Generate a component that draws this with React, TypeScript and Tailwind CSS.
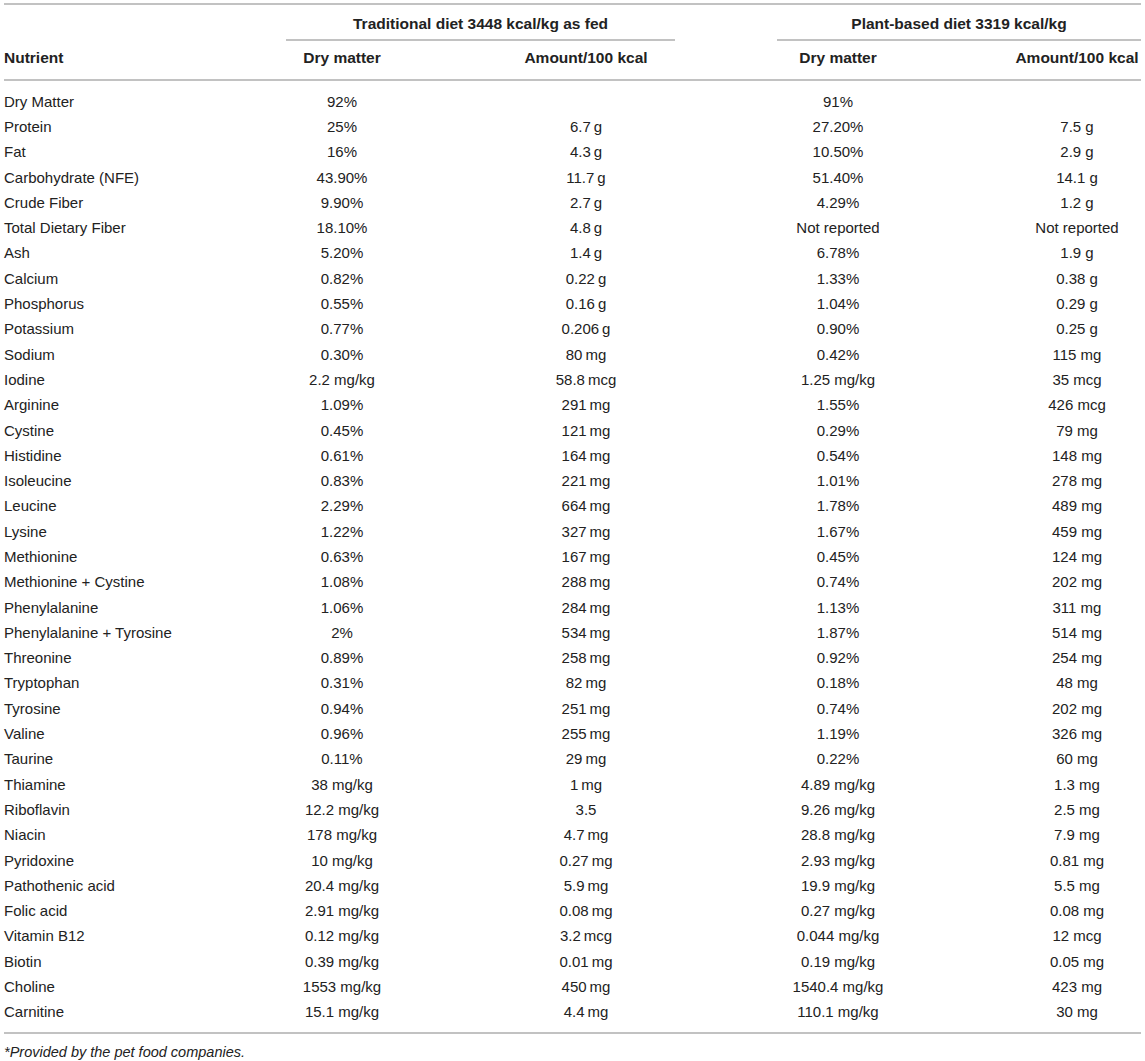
import React from "react";

const rows: string[][] = [
  ["Dry Matter", "92%", "", "91%", ""],
  ["Protein", "25%", "6.7 g", "27.20%", "7.5 g"],
  ["Fat", "16%", "4.3 g", "10.50%", "2.9 g"],
  ["Carbohydrate (NFE)", "43.90%", "11.7 g", "51.40%", "14.1 g"],
  ["Crude Fiber", "9.90%", "2.7 g", "4.29%", "1.2 g"],
  ["Total Dietary Fiber", "18.10%", "4.8 g", "Not reported", "Not reported"],
  ["Ash", "5.20%", "1.4 g", "6.78%", "1.9 g"],
  ["Calcium", "0.82%", "0.22 g", "1.33%", "0.38 g"],
  ["Phosphorus", "0.55%", "0.16 g", "1.04%", "0.29 g"],
  ["Potassium", "0.77%", "0.206 g", "0.90%", "0.25 g"],
  ["Sodium", "0.30%", "80 mg", "0.42%", "115 mg"],
  ["Iodine", "2.2 mg/kg", "58.8 mcg", "1.25 mg/kg", "35 mcg"],
  ["Arginine", "1.09%", "291 mg", "1.55%", "426 mcg"],
  ["Cystine", "0.45%", "121 mg", "0.29%", "79 mg"],
  ["Histidine", "0.61%", "164 mg", "0.54%", "148 mg"],
  ["Isoleucine", "0.83%", "221 mg", "1.01%", "278 mg"],
  ["Leucine", "2.29%", "664 mg", "1.78%", "489 mg"],
  ["Lysine", "1.22%", "327 mg", "1.67%", "459 mg"],
  ["Methionine", "0.63%", "167 mg", "0.45%", "124 mg"],
  ["Methionine + Cystine", "1.08%", "288 mg", "0.74%", "202 mg"],
  ["Phenylalanine", "1.06%", "284 mg", "1.13%", "311 mg"],
  ["Phenylalanine + Tyrosine", "2%", "534 mg", "1.87%", "514 mg"],
  ["Threonine", "0.89%", "258 mg", "0.92%", "254 mg"],
  ["Tryptophan", "0.31%", "82 mg", "0.18%", "48 mg"],
  ["Tyrosine", "0.94%", "251 mg", "0.74%", "202 mg"],
  ["Valine", "0.96%", "255 mg", "1.19%", "326 mg"],
  ["Taurine", "0.11%", "29 mg", "0.22%", "60 mg"],
  ["Thiamine", "38 mg/kg", "1 mg", "4.89 mg/kg", "1.3 mg"],
  ["Riboflavin", "12.2 mg/kg", "3.5", "9.26 mg/kg", "2.5 mg"],
  ["Niacin", "178 mg/kg", "4.7 mg", "28.8 mg/kg", "7.9 mg"],
  ["Pyridoxine", "10 mg/kg", "0.27 mg", "2.93 mg/kg", "0.81 mg"],
  ["Pathothenic acid", "20.4 mg/kg", "5.9 mg", "19.9 mg/kg", "5.5 mg"],
  ["Folic acid", "2.91 mg/kg", "0.08 mg", "0.27 mg/kg", "0.08 mg"],
  ["Vitamin B12", "0.12 mg/kg", "3.2 mcg", "0.044 mg/kg", "12 mcg"],
  ["Biotin", "0.39 mg/kg", "0.01 mg", "0.19 mg/kg", "0.05 mg"],
  ["Choline", "1553 mg/kg", "450 mg", "1540.4 mg/kg", "423 mg"],
  ["Carnitine", "15.1 mg/kg", "4.4 mg", "110.1 mg/kg", "30 mg"],
];

const cols = "grid grid-cols-[216px_244px_244px_260px_173px]";

export default function App() {
  return (
    <div
      className="w-[1145px] bg-white px-[4px] pt-[3px] text-[#222] text-[15px]"
      style={{ fontFamily: '"Liberation Sans", Arial, Helvetica, sans-serif' }}
    >
      <div className="border-t-2 border-[#c2c2c2]">
        {/* Group header row */}
        <div className={`${cols} text-[15.5px]`}>
          <div />
          <div className="col-span-2 ml-[66px] mr-[33px] border-b-2 border-[#c2c2c2] pt-[10px] pb-[6px] leading-[18px] text-center font-bold">
            Traditional diet 3448 kcal/kg as fed
          </div>
          <div className="col-span-2 ml-[69px] border-b-2 border-[#c2c2c2] pt-[10px] pb-[6px] leading-[18px] text-center font-bold">
            Plant-based diet 3319 kcal/kg
          </div>
        </div>
        {/* Column header row */}
        <div className={`${cols} border-b-2 border-[#c2c2c2] pt-[8px] pb-[12px] leading-[18px] font-bold text-[15.5px]`}>
          <div>Nutrient</div>
          <div className="text-center">Dry matter</div>
          <div className="text-center">Amount/100 kcal</div>
          <div className="text-center">Dry matter</div>
          <div className="pl-[45px] text-center whitespace-nowrap">Amount/100 kcal</div>
        </div>
        {/* Body */}
        <div className="border-b-2 border-[#c2c2c2] pt-[8px] pb-[7px]">
          {rows.map((r, i) => (
            <div key={i} className={`${cols} h-[25.3px] items-center leading-[18px]`}>
              <div className="whitespace-nowrap">{r[0]}</div>
              <div className="text-center">{r[1]}</div>
              <div className="text-center">{r[2].replace(" ", "\u2009")}</div>
              <div className="text-center">{r[3]}</div>
              <div className="pl-[45px] text-center whitespace-nowrap">{r[4]}</div>
            </div>
          ))}
        </div>
      </div>
      <div className="mt-[9px] text-[14.5px] italic leading-[18px]">
        *Provided by the pet food companies.
      </div>
    </div>
  );
}
